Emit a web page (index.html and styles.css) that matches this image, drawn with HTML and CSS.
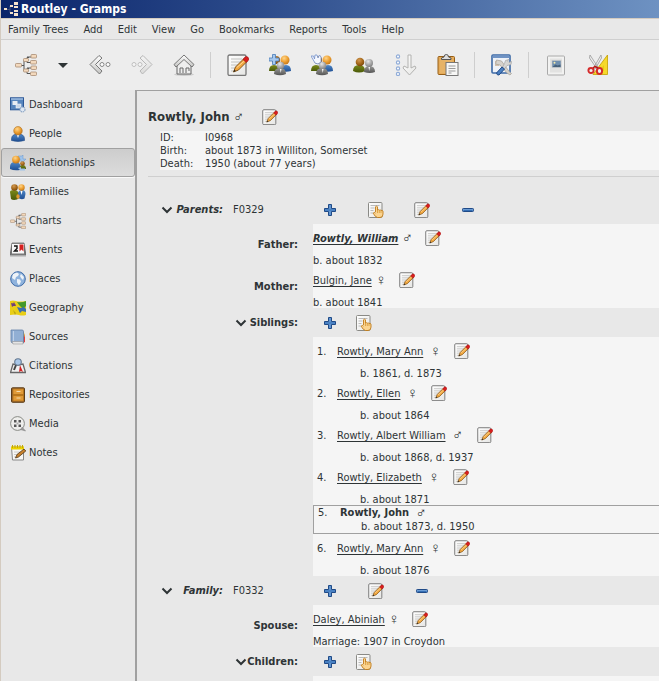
FILE: index.html
```html
<!DOCTYPE html>
<html lang="en">
<head>
<meta charset="utf-8">
<title>Routley - Gramps</title>
<link rel="stylesheet" href="styles.css">
</head>
<body>
<svg class="sprite" aria-hidden="true">
  <defs>
    <linearGradient id="gPaper" x1="0" y1="0" x2="1" y2="1"><stop offset="0" stop-color="#fff"/><stop offset="1" stop-color="#e6e6e4"/></linearGradient>
    <linearGradient id="gMetal" x1="0" y1="0" x2="0" y2="1"><stop offset="0" stop-color="#fff"/><stop offset="1" stop-color="#c4c4c2"/></linearGradient>
    <radialGradient id="gOrange" cx=".4" cy=".3" r=".8"><stop offset="0" stop-color="#ffd58a"/><stop offset=".5" stop-color="#eda032"/><stop offset="1" stop-color="#b86a10"/></radialGradient>
    <radialGradient id="gBrown" cx=".4" cy=".3" r=".8"><stop offset="0" stop-color="#d39a54"/><stop offset=".5" stop-color="#a76a1c"/><stop offset="1" stop-color="#6b3d08"/></radialGradient>
    <radialGradient id="gGrey" cx=".4" cy=".3" r=".8"><stop offset="0" stop-color="#e8e8e8"/><stop offset=".5" stop-color="#aaa"/><stop offset="1" stop-color="#777"/></radialGradient>
    <linearGradient id="gBlue" x1="0" y1="0" x2="0" y2="1"><stop offset="0" stop-color="#4f88c8"/><stop offset="1" stop-color="#1f4f94"/></linearGradient>
    <linearGradient id="gGreen" x1="0" y1="0" x2="0" y2="1"><stop offset="0" stop-color="#7c8a1c"/><stop offset="1" stop-color="#4a5a08"/></linearGradient>
    <linearGradient id="gSlate" x1="0" y1="0" x2="0" y2="1"><stop offset="0" stop-color="#9a9a98"/><stop offset="1" stop-color="#555"/></linearGradient>
  </defs>
  <symbol id="tree" viewBox="0 0 22 22">
    <path d="M6 11.500h3M9 6v11M9 6h3M9 17h3M14 3.500h-2v5h4M14 14.500h-2v5h4M12 3h4M12 14h4" fill="none" stroke="#555" stroke-width="1"/>
    <g fill="#f3d9bd" stroke="#a98d74" stroke-width=".8"><rect x=".5" y="9.500" width="6" height="3.500" rx=".8"/><rect x="8.500" y="4.500" width="5" height="3" rx=".8"/><rect x="8.500" y="15" width="5" height="3" rx=".8"/><rect x="16" y=".5" width="5.500" height="3.500" rx=".8"/><rect x="15.500" y="6.500" width="6" height="3.500" rx=".8"/><rect x="16" y="12" width="5.500" height="3.500" rx=".8"/><rect x="15.500" y="18" width="6" height="3.500" rx=".8"/></g>
  </symbol>
  <symbol id="appTree" viewBox="0 0 14 14">
    <path d="M3 7.500h3M6 4v7" stroke="#43507e" fill="none"/>
    <g fill="#f6e2cb"><rect x="0" y="6" width="3" height="2"/><rect x="6" y="3" width="3" height="2"/><rect x="6" y="10" width="3" height="2"/><rect x="10" y="0" width="4" height="3"/><rect x="10" y="4" width="4" height="2"/><rect x="10" y="8" width="4" height="2"/><rect x="10" y="11" width="4" height="3"/></g>
  </symbol>
  <symbol id="back" viewBox="0 0 22 22">
    <path d="M10 1.500 13 4 6.500 10.500 13 17l-2.500 3L1 10.500Z" fill="url(#gMetal)" stroke="#777" stroke-width="1" stroke-linejoin="round"/>
    <circle cx="13" cy="10.500" r="2" fill="#fff" stroke="#888"/><circle cx="19" cy="10.500" r="2" fill="#fff" stroke="#888"/>
  </symbol>
  <symbol id="home" viewBox="0 0 22 22">
    <ellipse cx="11" cy="20.500" rx="10" ry="1.500" fill="#ccc"/>
    <path d="M4 10v10h14V10l-7-6Z" fill="#eee" stroke="#666"/>
    <path d="M7 19v-5h3v5m3 0v-5h3v3" fill="none" stroke="#666"/>
    <path d="M11 1 1 10.500 3 13l8-7.500 8 7.500 2-2.500Z" fill="url(#gMetal)" stroke="#777" stroke-linejoin="round"/>
  </symbol>
  <symbol id="edit" viewBox="0 0 22 22">
    <rect x="1" y="1" width="18" height="20.500" rx="1.500" fill="url(#gPaper)" stroke="#777" stroke-width="1.300"/>
    <path d="M4 5h11M4 8h11M4 11h9M4 14h5M4 17h4" stroke="#c2c2c0" stroke-width="1.100"/>
    <path d="m6.500 18 2-5L17 4.500l3 3L11.500 16Z" fill="#f2a840" stroke="#774a12" stroke-width=".9" stroke-linejoin="round"/>
    <path d="m9.800 13.500 8.700-7.500" stroke="#ffd898" stroke-width="1"/>
    <path d="m6.500 18 .8-2.300 1.500 1.400Z" fill="#222"/>
    <path d="m16 5.500 2-2.500q1.500-1.200 3 .3t.3 3l-2 2.200Z" fill="#d81e1e" stroke="#9c1010" stroke-width=".6"/>
  </symbol>
  <symbol id="share" viewBox="0 0 16 16">
    <rect x=".5" y=".5" width="13.500" height="15" rx="1" fill="url(#gPaper)" stroke="#8a8a86"/>
    <path d="M2.500 3.500h9M2.500 6h4M2.500 8.500h3M2.500 11h3" stroke="#bbb"/>
    <path d="M7.500 10V4.800q1-1.300 2 0V8q1-.8 1.800.2 1-.7 1.700.3 1.200-.6 2 .6v3q0 3.400-3 3.400H9.500Q7 15 5.200 11.200q.8-1.500 2.300-.2" fill="#fbd490" stroke="#c07a18" stroke-width=".9" stroke-linejoin="round"/>
    <path d="M9.500 8v3M11.300 8.500V11M13 9v2" stroke="#d3922e" stroke-width=".7"/>
  </symbol>
  <symbol id="plus" viewBox="0 0 12 12">
    <path d="M4.500.5h3v4h4v3h-4v4h-3v-4h-4v-3h4Z" fill="#5f94d0" stroke="#204a87" stroke-linejoin="round"/><path d="M1 6h10" stroke="#356fb5" stroke-width="1"/>
  </symbol>
  <symbol id="minus" viewBox="0 0 12 12"><rect x=".5" y="4.500" width="11" height="3" rx=".8" fill="#6b9cd4" stroke="#204a87"/><path d="M1.500 6.500h9" stroke="#356fb5"/></symbol>
  <symbol id="chevron" viewBox="0 0 12 8"><path d="m1.500 1.500 4.500 4.500 4.500-4.500" fill="none" stroke="#2e3436" stroke-width="2"/></symbol>
  <symbol id="man" viewBox="0 0 16 16">
    <path d="M1.500 13q0-5 6.500-5t6.500 5v1.500q-6.500 2-13 0Z" fill="url(#gBlue)" stroke="#204a87" stroke-width=".6"/>
    <path d="m6.500 8 1.500 4 1.500-4Z" fill="#fff"/><circle cx="8" cy="4.800" r="4.300" fill="url(#gOrange)" stroke="#a56618" stroke-width=".5"/>
  </symbol>
  <symbol id="trio" viewBox="0 0 22 22">
    <path d="M0 17q0-6 5-6t6 6Z" fill="url(#gGreen)"/><path d="M12 17q0-6 5-6t5 6q-5 1.500-10 0Z" fill="url(#gBlue)"/>
    <circle cx="7" cy="6" r="4" fill="url(#gBrown)"/><circle cx="16" cy="6" r="4.500" fill="url(#gOrange)"/>
    <path d="M5 20q0-6 6-6t6 6q-6 2.500-12 0Z" fill="url(#gSlate)"/><circle cx="11.500" cy="11.500" r="3.800" fill="url(#gGrey)"/>
    <path d="m11 15 .7 4 .8-4Z" fill="#fff"/>
  </symbol>
  <symbol id="addParents" viewBox="0 0 22 22"><use href="#trio"/><path d="M3.500.5h3v3.500H10v3H6.500v3.500h-3V7H0V4h3.500Z" fill="#a6c8ee" stroke="#4a7cb8" stroke-width=".8"/></symbol>
  <symbol id="shareFamily" viewBox="0 0 22 22"><use href="#trio"/><path d="m0 2 2.500 0 1 3L4 1h2l1 3 1.500-3L10 3v5l-3 2-3-1Z" fill="#f4f7ff" stroke="#7392cb" stroke-width=".8"/></symbol>
  <symbol id="couple" viewBox="0 0 22 22">
    <path d="M0 17q0-6 6-6t6 6q-6 3-12 0Z" fill="url(#gGreen)"/><circle cx="7" cy="8" r="4.300" fill="url(#gBrown)"/>
    <path d="M11 18q0-6 5.500-6t5.500 6q-5 2-11 0Z" fill="url(#gSlate)"/><circle cx="16" cy="9" r="4" fill="url(#gGrey)"/><path d="m15.500 13 .7 4 .8-4Z" fill="#fff"/>
  </symbol>
  <symbol id="order" viewBox="0 0 22 22">
    <g fill="#fff" stroke="#90acd8" stroke-width="1.200"><circle cx="3" cy="2.500" r="1.600"/><circle cx="3" cy="8.500" r="1.600"/><circle cx="3" cy="14.500" r="1.600"/><circle cx="3" cy="20" r="1.600"/></g>
    <path d="M13 1h3v13l4-2 1 2-6.500 7L8 14l1-2 4 2Z" fill="url(#gPaper)" stroke="#b2b2b0" stroke-linejoin="round"/>
  </symbol>
  <symbol id="clip" viewBox="0 0 22 22">
    <rect x="1" y="2.500" width="16.500" height="18" rx="1" fill="#e5ab59" stroke="#965e16"/><path d="M3 5h12.500v14H3Z" fill="#e7b366"/>
    <path d="M4.500 5.500V4L7 3q0-2.500 2.300-2.500T11.500 3L14 4v1.500Z" fill="#ddd" stroke="#555"/>
    <rect x="9" y="8.500" width="12" height="13" fill="#f7f7f6" stroke="#777"/><path d="M11.500 12h7M11.500 14.500h7M11.500 17h7M11.500 19h3" stroke="#999"/>
  </symbol>
  <symbol id="configure" viewBox="0 0 22 22">
    <rect x="1" y="1" width="18" height="18" rx="1" fill="#eef2f8" stroke="#3c69a6" stroke-width="1.600"/><path d="M1.500 1.500h17V4h-17Z" fill="#6f93c4"/><path d="M4 8h5M4 11h4" stroke="#d5c2ac" stroke-width="2"/>
    <path d="m5.500 6 5 1 8 11 2 1.500-1.500 1.500-3-2L9 11 4.500 10Z" fill="#d6d2cc" stroke="#aaa49c" stroke-width=".8"/>
    <path d="m18 5.500-3.500 1-1 3L11 14l2 1.500 3-4 4-1 .5-3-2.500 1-1.500-1.500Z" fill="#d6d6d4" stroke="#aaa" stroke-width=".8"/>
    <path d="m11 13 2.500 2-5.500 6q-2 .5-2.500-2Z" fill="#4b80c2" stroke="#204a87"/>
  </symbol>
  <symbol id="picture" viewBox="0 0 22 22">
    <rect x="2.500" y="2" width="17" height="19" rx="1" fill="#f2f2f1" stroke="#aaa"/><rect x="5" y="4.500" width="12" height="14" fill="#e2e2e1"/><rect x="7" y="6.500" width="9" height="7" fill="#6f8fae" stroke="#c7c7c7" stroke-width=".6"/><path d="m7.500 13 3-2.500 2 1 3-1V13Z" fill="#46617a"/><circle cx="9.500" cy="8.700" r="1" fill="#f7ecac"/>
  </symbol>
  <symbol id="scissors" viewBox="0 0 22 22">
    <path d="M20.500 1v19.500H6Z" fill="#f6d92a" stroke="#c4a000" stroke-width=".8"/><path d="M17 11v6h-5Z" fill="#e9c815"/>
    <path d="m3 1 8.500 13-1.500 1L2.500 4ZM14 1 6.500 14l1.500 1L14.500 4Z" fill="#eee" stroke="#999" stroke-width=".8"/>
    <ellipse cx="4" cy="16.500" rx="2.600" ry="2.500" fill="#eee" stroke="#d52a2a" stroke-width="1.900"/><ellipse cx="12.500" cy="17" rx="2.600" ry="3" fill="#eee" stroke="#d52a2a" stroke-width="1.900"/><path d="m6 14 2-1.500L11 14" stroke="#b81818" stroke-width="1.500" fill="none"/>
  </symbol>
  <symbol id="dashboard" viewBox="0 0 16 16">
    <rect x=".5" y=".8" width="13" height="12" fill="#5785bd" stroke="#2c5796"/><path d="M1 1.300h12v1.500H1Z" fill="#9dbbe0"/><rect x="2.500" y="4" width="5" height="4" fill="#e6ebf2"/><rect x="6" y="7" width="5" height="4" fill="#c9d6e8" stroke="#fff" stroke-width=".5"/><circle cx="12.500" cy="12.500" r="2.500" fill="#dfe8f3" stroke="#8ea6c4" stroke-width="1.200" stroke-dasharray="1.500 .6"/>
  </symbol>
  <symbol id="relations" viewBox="0 0 16 16">
    <path d="M8 1h4l1-1v4h3l-4 4-2-4Z" fill="#9fc3ea" stroke="#6795cd" stroke-width=".5"/>
    <path d="M0 12q0-5 5-5t6 5l-1 3q-6 1-10-1Z" fill="url(#gBlue)"/><circle cx="6" cy="4.600" r="3.900" fill="url(#gOrange)"/><path d="M9.500 14q0-4 3.200-4t3.300 4Z" fill="url(#gGreen)"/><circle cx="12.500" cy="8.500" r="2.300" fill="url(#gBrown)"/><path d="m8 13 3-1v1.500h4v2h-4V16Z" fill="#9fc3ea"/>
  </symbol>
  <symbol id="families" viewBox="0 0 16 16">
    <path d="M0 8q0-2 4-2t5 4v4l-2 1.500q-4 1-6-.5Z" fill="url(#gGreen)"/><circle cx="4.500" cy="3.500" r="3.300" fill="url(#gBrown)"/><path d="M8 14V9q1-3 4-3 3.500 0 3.500 4l-1 4.500q-3 1.500-6.500-.5Z" fill="url(#gBlue)"/><path d="m10.500 7 1 4 1-4Z" fill="#fff"/><circle cx="11.500" cy="3.500" r="3.200" fill="url(#gOrange)"/><ellipse cx="8" cy="12.500" rx="1.700" ry="2.200" fill="#e09a30"/>
  </symbol>
  <symbol id="events" viewBox="0 0 16 16">
    <path d="M2 1h12l2 12.500H0Z" fill="#777" stroke="#444" stroke-width=".6"/><rect x="2" y="1.800" width="12" height="9.700" fill="#f7f7f7"/><path d="M4 4h3v2.500L4.500 9H8" fill="none" stroke="#111" stroke-width="1.400"/><path d="M9.500 2.500h4v7l-2-2-2 2Z" fill="#d62020"/><path d="M0 13h16v1.500H0Z" fill="#aaa"/>
  </symbol>
  <symbol id="places" viewBox="0 0 16 16"><circle cx="8" cy="8" r="7.300" fill="#8fb3dd" stroke="#3f6ca8"/><path d="m3 3 4-1.500L9 3 8 5 6 6 5 9 2 7ZM7 8l3 .5 1 2-2 4-2-3ZM11 3l3 3-1 3-2-2-1-2Z" fill="#eef3f8"/></symbol>
  <symbol id="geography" viewBox="0 0 16 16"><path d="M0 1q3-1 6 0t10 0v14q-4 1-7 0t-9 0Z" fill="#e9ce16"/><path d="M7 2q5 1 9-1v5l-3 3-4-4Z" fill="#45982a"/><path d="m7 7 4 1 3-1 2 2v3l-4-1-2 2Z" fill="#3d6ead"/><path d="m2 6 2-4 2 4ZM1 3l5 1-4 3" fill="#70407c"/><path d="m3 10 3 3-1 2Z" fill="#b9a510"/></symbol>
  <symbol id="sources" viewBox="0 0 16 16"><path d="m13 2 2 5v6l-2 1Z" fill="#e63d3d"/><path d="m13 2 1.500 3v3L13 7Z" fill="#dcd23e"/><path d="M1 1h11q1.500 0 1.500 1.500V14H3q-2 0-2-2Z" fill="#91afd4" stroke="#6280a8" stroke-width=".8"/><path d="M2 12.500h11V15H3Z" fill="#e5e5e5" stroke="#888" stroke-width=".5"/><path d="M3.500 2v10" stroke="#bfd1e8"/></symbol>
  <symbol id="citations" viewBox="0 0 16 16"><path d="m3 6-2.500 8.500H8h7.500L13 6 8 7Z" fill="#f0f0f0" stroke="#666" stroke-width="1.300"/><path d="m10 7 3 7-2-1-2 1Z" fill="#d42222"/><path d="M6 7 4 12" stroke="#444" stroke-width="2"/><circle cx="8" cy="4" r="3.300" fill="#a9c7e8" stroke="#657990" stroke-width="1.100"/></symbol>
  <symbol id="repositories" viewBox="0 0 16 16"><rect x="1.500" y=".8" width="13" height="14.500" rx="1" fill="#8a6036" stroke="#5c3c18"/><rect x="3" y="2" width="10.500" height="5.500" fill="#e09a38" stroke="#b97517" stroke-width=".8"/><rect x="3" y="8.500" width="10.500" height="5.500" fill="#e09a38" stroke="#b97517" stroke-width=".8"/><path d="M6.500 4.500h4M6.500 11h4" stroke="#f3dcae" stroke-width="1.200"/></symbol>
  <symbol id="media" viewBox="0 0 16 16"><circle cx="7.500" cy="7.500" r="6.900" fill="#eeeeec" stroke="#888a85"/><path d="M10 13.500q3 .5 5.500 1.500l-3.500-4" fill="#999" stroke="#888" stroke-width=".6"/><g fill="#555"><rect x="4" y="4" width="2.500" height="2.500"/><rect x="8.500" y="4" width="2.500" height="2.500"/><rect x="4" y="8.500" width="2.500" height="2.500"/><rect x="8.500" y="8.500" width="2.500" height="2.500"/></g><circle cx="7.500" cy="7.500" r="1" fill="#aaa"/></symbol>
  <symbol id="notes" viewBox="0 0 16 16"><path d="M1.500 2h12v13h-11Z" fill="#f7f7f5" stroke="#888"/><path d="M1 1.500h13v3H1Z" fill="#edd400"/><path d="M2.500 0v3M5 0v3M7.500 0v3M10 0v3M12.500 0v3" stroke="#c7a800"/><path d="M4 7h6M4 9.500h4M4 12h2" stroke="#ccc"/><path d="m5.500 13 1.500-3.500L14 4l1.800 2-7.300 6Z" fill="#c9822d" stroke="#4f3516" stroke-width=".8"/></symbol>
</svg>

<div class="window">
  <header class="titlebar"><svg class="i14"><use href="#appTree"/></svg><h1>Routley - Gramps</h1></header>
  <nav class="menubar" aria-label="Menu">
    <button>Family Trees</button><button>Add</button><button>Edit</button><button>View</button><button>Go</button><button>Bookmarks</button><button>Reports</button><button>Tools</button><button>Help</button>
  </nav>
  <div class="toolbar" role="toolbar">
    <button aria-label="Family trees"><svg class="i22"><use href="#tree"/></svg></button>
    <button class="drop" aria-label="Recent trees"><svg class="caret" viewBox="0 0 10 5"><path d="M0 0h10L5 5Z" fill="#2e3436"/></svg></button>
    <button aria-label="Back"><svg class="i22"><use href="#back"/></svg></button>
    <button aria-label="Forward" disabled><svg class="i22 flip"><use href="#back"/></svg></button>
    <button aria-label="Home"><svg class="i22"><use href="#home"/></svg></button>
    <span class="sep"></span>
    <button aria-label="Edit"><svg class="i22"><use href="#edit"/></svg></button>
    <button aria-label="Add parents"><svg class="i22"><use href="#addParents"/></svg></button>
    <button aria-label="Share family"><svg class="i22"><use href="#shareFamily"/></svg></button>
    <button aria-label="Add partner"><svg class="i22"><use href="#couple"/></svg></button>
    <button aria-label="Reorder"><svg class="i22"><use href="#order"/></svg></button>
    <button aria-label="Clipboard"><svg class="i22"><use href="#clip"/></svg></button>
    <span class="sep"></span>
    <button aria-label="Configure"><svg class="i22"><use href="#configure"/></svg></button>
    <span class="sep"></span>
    <button aria-label="Reports"><svg class="i22"><use href="#picture"/></svg></button>
    <button aria-label="Tools"><svg class="i22"><use href="#scissors"/></svg></button>
  </div>
  <div class="workspace">
    <nav class="sidebar" aria-label="Views">
      <button><svg class="i16"><use href="#dashboard"/></svg>Dashboard</button>
      <button><svg class="i16"><use href="#man"/></svg>People</button>
      <button class="active"><svg class="i16"><use href="#relations"/></svg>Relationships</button>
      <button><svg class="i16"><use href="#families"/></svg>Families</button>
      <button><svg class="i16"><use href="#tree"/></svg>Charts</button>
      <button><svg class="i16"><use href="#events"/></svg>Events</button>
      <button><svg class="i16"><use href="#places"/></svg>Places</button>
      <button><svg class="i16"><use href="#geography"/></svg>Geography</button>
      <button><svg class="i16"><use href="#sources"/></svg>Sources</button>
      <button><svg class="i16"><use href="#citations"/></svg>Citations</button>
      <button><svg class="i16"><use href="#repositories"/></svg>Repositories</button>
      <button><svg class="i16"><use href="#media"/></svg>Media</button>
      <button><svg class="i16"><use href="#notes"/></svg>Notes</button>
    </nav>
    <main class="content">
      <div class="heading"><h2>Rowtly, John</h2><span class="sex">♂</span><button class="tool" aria-label="Edit person"><svg class="i16"><use href="#edit"/></svg></button></div>
      <dl class="facts"><dt>ID:</dt><dd>I0968</dd><dt>Birth:</dt><dd>about 1873 in Williton, Somerset</dd><dt>Death:</dt><dd>1950 (about 77 years)</dd></dl>
      <hr>
      <section>
        <div class="row">
          <div class="section-label"><button class="fold" aria-label="Collapse parents"><svg class="chev"><use href="#chevron"/></svg></button><h3>Parents:</h3><span>F0329</span></div>
          <div class="tools wide"><button class="tool" aria-label="Add"><svg class="i12"><use href="#plus"/></svg></button><button class="tool" aria-label="Share"><svg class="i16"><use href="#share"/></svg></button><button class="tool" aria-label="Edit"><svg class="i16"><use href="#edit"/></svg></button><button class="tool" aria-label="Remove"><svg class="i12"><use href="#minus"/></svg></button></div>
        </div>
        <div class="row"><div class="label">Father:</div>
          <div class="panel"><div class="person"><a class="birth" href="#">Rowtly, William</a><span class="sex">♂</span><button class="tool" aria-label="Edit"><svg class="i16"><use href="#edit"/></svg></button></div><p>b. about 1832</p></div></div>
        <div class="row"><div class="label">Mother:</div>
          <div class="panel"><div class="person"><a href="#">Bulgin, Jane</a><span class="sex">♀</span><button class="tool" aria-label="Edit"><svg class="i16"><use href="#edit"/></svg></button></div><p>b. about 1841</p></div></div>
        <div class="row"><div class="label"><button class="fold" aria-label="Collapse siblings"><svg class="chev"><use href="#chevron"/></svg></button><span class="sub">Siblings:</span></div>
          <div class="tools"><button class="tool" aria-label="Add"><svg class="i12"><use href="#plus"/></svg></button><button class="tool" aria-label="Share"><svg class="i16"><use href="#share"/></svg></button></div></div>
        <div class="row"><div></div>
          <div class="panel siblings">
            <div class="sibling"><div class="person"><span class="num">1.</span><a href="#">Rowtly, Mary Ann</a><span class="sex">♀</span><button class="tool" aria-label="Edit"><svg class="i16"><use href="#edit"/></svg></button></div><p>b. 1861, d. 1873</p></div>
            <div class="sibling"><div class="person"><span class="num">2.</span><a href="#">Rowtly, Ellen</a><span class="sex">♀</span><button class="tool" aria-label="Edit"><svg class="i16"><use href="#edit"/></svg></button></div><p>b. about 1864</p></div>
            <div class="sibling"><div class="person"><span class="num">3.</span><a href="#">Rowtly, Albert William</a><span class="sex">♂</span><button class="tool" aria-label="Edit"><svg class="i16"><use href="#edit"/></svg></button></div><p>b. about 1868, d. 1937</p></div>
            <div class="sibling"><div class="person"><span class="num">4.</span><a href="#">Rowtly, Elizabeth</a><span class="sex">♀</span><button class="tool" aria-label="Edit"><svg class="i16"><use href="#edit"/></svg></button></div><p>b. about 1871</p></div>
            <div class="sibling current"><div class="person"><span class="num">5.</span><b>Rowtly, John</b><span class="sex">♂</span></div><p>b. about 1873, d. 1950</p></div>
            <div class="sibling"><div class="person"><span class="num">6.</span><a href="#">Rowtly, Mary Ann</a><span class="sex">♀</span><button class="tool" aria-label="Edit"><svg class="i16"><use href="#edit"/></svg></button></div><p>b. about 1876</p></div>
          </div></div>
      </section>
      <section>
        <div class="row">
          <div class="section-label"><button class="fold" aria-label="Collapse family"><svg class="chev"><use href="#chevron"/></svg></button><h3>Family:</h3><span>F0332</span></div>
          <div class="tools wide"><button class="tool" aria-label="Add"><svg class="i12"><use href="#plus"/></svg></button><button class="tool" aria-label="Edit"><svg class="i16"><use href="#edit"/></svg></button><button class="tool" aria-label="Remove"><svg class="i12"><use href="#minus"/></svg></button></div>
        </div>
        <div class="row"><div class="label">Spouse:</div>
          <div class="panel"><div class="person"><a href="#">Daley, Abiniah</a><span class="sex">♀</span><button class="tool" aria-label="Edit"><svg class="i16"><use href="#edit"/></svg></button></div><p>Marriage: 1907 in Croydon</p></div></div>
        <div class="row"><div class="label"><button class="fold" aria-label="Collapse children"><svg class="chev"><use href="#chevron"/></svg></button><span class="sub">Children:</span></div>
          <div class="tools"><button class="tool" aria-label="Add"><svg class="i12"><use href="#plus"/></svg></button><button class="tool" aria-label="Share"><svg class="i16"><use href="#share"/></svg></button></div></div>
        <div class="row fill"><div></div><div class="panel"></div></div>
      </section>
    </main>
  </div>
</div>
</body>
</html>
```
FILE: styles.css
```css
* { box-sizing: border-box; }
html, body { height: 100%; }
body {
  margin: 0;
  background: #e8e8e8;
  color: #2e3436;
  font: 11px/14px "DejaVu Sans Condensed", "Noto Sans", sans-serif;
  overflow: hidden;
}
h1, h2, h3, p, dl, dd { margin: 0; }
button {
  margin: 0;
  padding: 0;
  border: 0;
  background: none;
  color: inherit;
  font: inherit;
}
a { color: inherit; text-decoration: underline; text-underline-offset: 2px; }
svg { display: block; flex: none; }
.sprite { position: absolute; width: 0; height: 0; }
.i12 { width: 12px; height: 12px; }
.i14 { width: 14px; height: 14px; }
.i16 { width: 16px; height: 16px; }
.i22 { width: 22px; height: 22px; }

.window {
  display: flex;
  flex-direction: column;
  min-height: 100%;
  border-left: 1px solid #d4cbc0;
}
.titlebar {
  display: flex;
  align-items: center;
  gap: 3px;
  height: 19px;
  padding-left: 3px;
  border-bottom: 1px solid #d4cbc0;
  background: linear-gradient(90deg, #0a246a, #2b4a8a 38%, #6e92c2);
  color: #fff;
}
.titlebar h1 { font-size: 12px; line-height: 18px; }
.menubar {
  display: flex;
  gap: 15px;
  height: 21px;
  padding: 2px 0 0 7px;
  border-bottom: 1px solid #cfcfcf;
}
.toolbar {
  display: flex;
  align-items: center;
  height: 50px;
  padding-left: 4px;
  background: #ededed;
}
.toolbar button { display: grid; place-items: center; width: 42px; height: 42px; }
.toolbar .drop { width: 32px; }
.toolbar button:disabled { opacity: .45; }
.caret { width: 10px; height: 5px; }
.flip { transform: scaleX(-1); }
.sep { width: 1px; height: 26px; margin: 0 6px 0 5px; background: #cecece; }

.workspace { display: flex; flex: 1; }
.sidebar { flex: none; width: 134px; }
.sidebar button {
  display: flex;
  align-items: center;
  gap: 3px;
  width: 100%;
  height: 29px;
  padding-left: 8px;
  border: 1px solid transparent;
  border-radius: 3px;
}
.sidebar .active {
  border-color: #a0a0a0;
  background: linear-gradient(#cdcdcd, #dcdcdc);
  box-shadow: 0 1px #fafafa;
}
.content {
  display: flex;
  flex: 1;
  flex-direction: column;
  min-width: 0;
  padding: 11px 0 0 11px;
  border-top: 1px solid #a0a0a0;
  border-left: 2px solid #a0a0a0;
}
.heading { display: flex; align-items: center; height: 29px; }
.heading h2 { font-size: 13px; line-height: 16px; }
.sex {
  width: 12px;
  margin: 0 3px;
  font-family: "Liberation Sans", sans-serif;
  font-size: 15px;
  text-align: center;
}
.heading .sex { margin-right: 8px; }
.tool { display: grid; place-items: center; width: 34px; height: 28px; }
.facts {
  display: grid;
  grid-template-columns: 45px 1fr;
  margin-left: 12px;
  background: #f5f5f5;
  line-height: 13px;
}
hr { width: 100%; height: 1px; margin: 6px 0 18px; border: 0; background: #cfcfcf; }
section { display: flex; flex-direction: column; }
section:last-child { flex: 1; }
.row { display: grid; grid-template-columns: 150px 1fr; column-gap: 15px; }
.section-label { display: flex; align-items: center; padding-left: 13px; }
.section-label h3 { width: 49px; margin: 0 10px 0 1px; font-size: 11px; font-style: italic; text-align: right; white-space: nowrap; }
.chev { width: 12px; height: 8px; }
.tools { display: flex; align-items: center; height: 29px; }
.wide { gap: 12px; }
.label { display: flex; align-items: center; justify-content: flex-end; font-weight: bold; }
.sub { width: 51px; text-align: right; white-space: nowrap; }
.panel { background: #f5f5f5; }
.panel p { height: 14px; line-height: 17px; }
.person { display: flex; align-items: center; height: 28px; }
.person a, .num { padding-top: 2px; }
.birth { font-weight: bold; font-style: italic; }
.num { width: 20px; }
.siblings .person { padding-left: 4px; }
.siblings .sex { margin: 0 4px 0 6px; }
.siblings p { padding-left: 47px; }
.current { height: 29px; border: 1px solid #a0a0a0; border-right: 0; }
.current .person { height: 14px; }
.current .num { width: 22px; padding-top: 0; }
.current p { line-height: 14px; }
.fill { flex: 1; min-height: 5px; }
```
